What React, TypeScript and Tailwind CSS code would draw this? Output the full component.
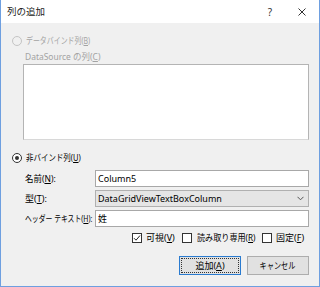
import React from "react";

function Radio({ checked, disabled }: { checked?: boolean; disabled?: boolean }) {
  return (
    <div
      className={
        "w-[10px] h-[10px] rounded-full border flex items-center justify-center shrink-0 " +
        (disabled ? "border-[#c4c4c4] bg-[#f0f0f0]" : "border-[#333333] bg-white")
      }
    >
      {checked && <div className="w-[4px] h-[4px] rounded-full bg-[#333333]" />}
    </div>
  );
}

function Check({ checked }: { checked?: boolean }) {
  return (
    <div className="w-[10px] h-[10px] border border-[#333333] bg-white flex items-center justify-center shrink-0">
      {checked && (
        <svg width="8" height="8" viewBox="0 0 8 8">
          <path d="M1 4.2 L3 6.2 L7 1.5" fill="none" stroke="#222" strokeWidth="1" />
        </svg>
      )}
    </div>
  );
}

export default function App() {
  return (
    <div className="w-[320px] h-[287px] bg-[#f0f0f0] border border-t-0 border-[#6e9fe0] flex flex-col text-[9px] leading-[12px] text-black font-['Noto_Sans','Noto_Sans_CJK_JP',sans-serif] overflow-hidden">
      {/* title bar */}
      <div className="h-[23px] bg-white flex items-center pl-[6px] shrink-0">
        <span className="text-[9.5px] text-[#222]">列の追加</span>
        <span className="ml-auto w-[10px] text-center text-[10px] text-[#333]">?</span>
        <span className="ml-[22px] mr-[12px] w-[10px] flex justify-center">
          <svg width="8" height="8" viewBox="0 0 8 8">
            <path d="M0.5 0.5 L7.5 7.5 M7.5 0.5 L0.5 7.5" stroke="#333" strokeWidth="1" />
          </svg>
        </span>
      </div>

      <div className="flex flex-col pl-[11px] pr-[10px]">
        {/* radio 1 */}
        <div className="mt-[13px] h-[10px] flex items-center gap-[4px] text-[#a3a3a3]">
          <Radio disabled />
          <span className="w-[64px] whitespace-nowrap">
            <span className="inline-block origin-left scale-x-[0.77]">
              データバインド列(<u>B</u>)
            </span>
          </span>
        </div>
        <div className="mt-[5px] h-[12px] ml-[13px] flex items-center text-[#a3a3a3]">
          <span className="inline-block origin-left scale-x-[0.94] whitespace-nowrap">
            DataSource の列(<u>C</u>)
          </span>
        </div>
        <div className="mt-[1px] ml-[11px] h-[76px] bg-white border border-[#b4b4b4] border-b-[#d8d8d8]" />

        {/* radio 2 */}
        <div className="mt-[13px] h-[10px] flex items-center gap-[4px]">
          <Radio checked />
          <span className="w-[56px] whitespace-nowrap">
            <span className="inline-block origin-left scale-x-[0.83]">
              非バインド列(<u>U</u>)
            </span>
          </span>
        </div>

        <div className="mt-[7px] ml-[13px] flex flex-col gap-[3px]">
          <div className="flex items-center h-[17px]">
            <span className="w-[70px] whitespace-nowrap">
              <span className="inline-block origin-left scale-x-[0.94]">
                名前(<u>N</u>):
              </span>
            </span>
            <div className="flex-1 h-[17px] bg-white border border-[#a8a8a8] flex items-center pl-[2px]">Column5</div>
          </div>
          <div className="flex items-center h-[17px]">
            <span className="w-[70px]">
              型(<u>T</u>):
            </span>
            <div className="flex-1 h-[17px] bg-[#e5e5e5] border border-[#b0b0b0] flex items-center pl-[2px]">
              <span>DataGridViewTextBoxColumn</span>
              <svg className="ml-auto mr-[4px]" width="7" height="5" viewBox="0 0 7 5">
                <path d="M0.5 0.8 L3.5 3.8 L6.5 0.8" fill="none" stroke="#555" strokeWidth="1" />
              </svg>
            </div>
          </div>
          <div className="flex items-center h-[17px]">
            <span className="w-[70px] whitespace-nowrap">
              <span className="inline-block origin-left scale-x-[0.76]">
                ヘッダー テキスト(<u>H</u>):
              </span>
            </span>
            <div className="flex-1 h-[17px] bg-white border border-[#a8a8a8] flex items-center pl-[2px]">姓</div>
          </div>
        </div>

        {/* checkboxes */}
        <div className="mt-[6px] h-[10px] flex items-center justify-end pr-[5px]">
          <Check checked />
          <span className="ml-[4px] w-[30px] whitespace-nowrap">
            可視(<u>V</u>)
          </span>
          <div className="ml-[6px]">
            <Check />
          </div>
          <span className="ml-[5px] w-[59px] whitespace-nowrap">
            <span className="inline-block origin-left scale-x-[0.9]">
              読み取り専用(<u>R</u>)
            </span>
          </span>
          <div className="ml-[6px]">
            <Check />
          </div>
          <span className="ml-[4px] w-[28px] whitespace-nowrap">
            固定(<u>F</u>)
          </span>
        </div>

        {/* buttons */}
        <div className="mt-[13px] flex justify-end gap-[6px]">
          <div className="w-[62px] h-[19px] bg-[#e1e1e1] border border-[#2a7bd0] p-[1px]">
            <div className="w-full h-full border border-dotted border-[#333] flex items-center justify-center whitespace-nowrap">
              追加(<u>A</u>)
            </div>
          </div>
          <div className="w-[62px] h-[19px] bg-[#e1e1e1] border border-[#adadad] flex items-center justify-center whitespace-nowrap">
            <span className="inline-block scale-x-[0.8]">キャンセル</span>
          </div>
        </div>
      </div>
    </div>
  );
}
